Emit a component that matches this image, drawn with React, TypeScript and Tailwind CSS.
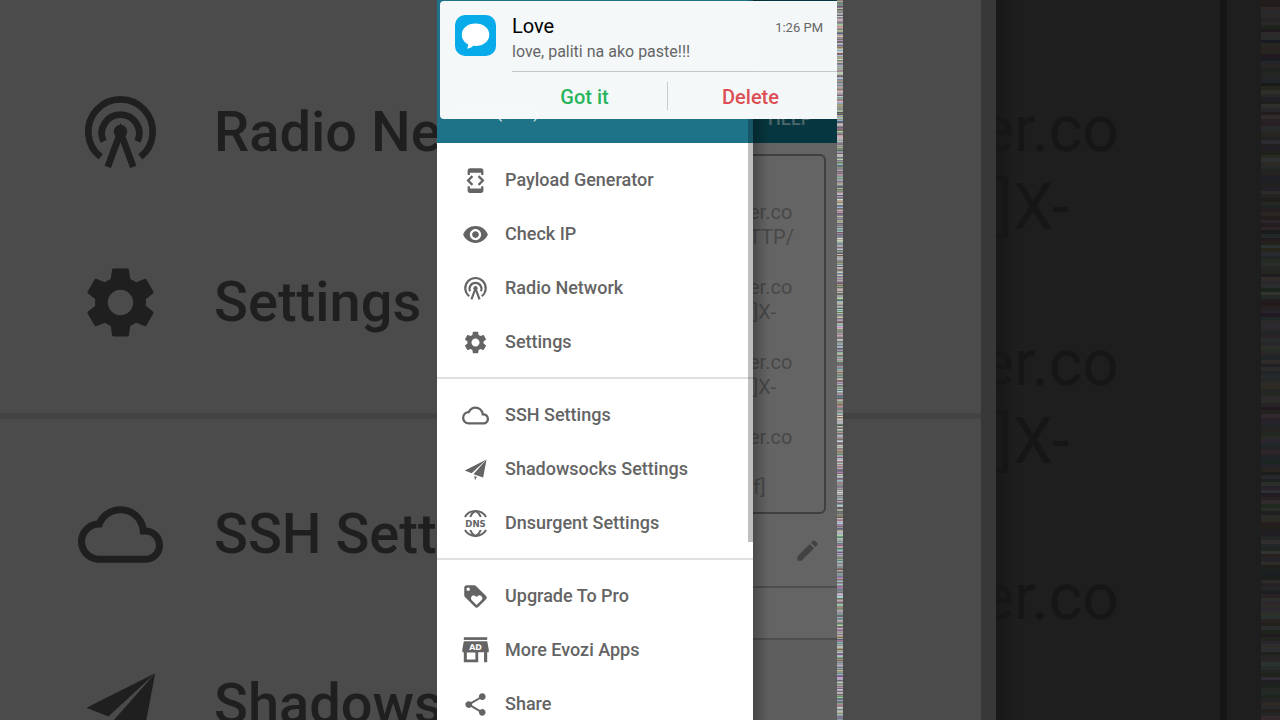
import type { ReactNode } from "react";
import {
  MdCloudQueue,
  MdDeveloperMode,
  MdEdit,
  MdLoyalty,
  MdSettings,
  MdShare,
  MdVisibility,
} from "react-icons/md";

type IconProps = { className?: string };

type MenuEntry = {
  label: string;
  icon: (props: IconProps) => ReactNode;
};

function RadioIcon({ className }: IconProps) {
  return (
    <svg
      viewBox="0 0 24 24"
      className={className}
      fill="none"
      stroke="currentColor"
      strokeWidth="1.9"
      aria-hidden="true"
    >
      <path d="M6.4 18.9A9.1 9.1 0 1 1 17.6 18.9" />
      <path d="M7.2 14.5A5.3 5.3 0 1 1 16.8 14.5" />
      <circle cx="12" cy="11.7" r="1.9" fill="currentColor" stroke="none" />
      <path d="M8.4 21.7L12 12L15.6 21.7" />
    </svg>
  );
}

function PlaneIcon({ className }: IconProps) {
  return (
    <svg viewBox="0 0 24 24" className={className} fill="currentColor" aria-hidden="true">
      <path d="M21.8 3.2L2.4 12.9L8.6 15.4Z" />
      <path d="M21.8 3.2L10.2 16.3L18.8 19Z" />
      <path d="M10.8 17.8L13.2 18.6L11.6 21.4Z" />
    </svg>
  );
}

function DnsIcon({ className }: IconProps) {
  return (
    <svg viewBox="0 0 24 24" className={className} overflow="visible" aria-hidden="true">
      <g fill="none" stroke="currentColor" strokeWidth="1.8">
        <path d="M2.6 6.2A11 11 0 0 1 21.4 6.2" />
        <path d="M7.3 6.2Q8.6 2.6 12 .8Q15.4 2.6 16.7 6.2" />
        <path d="M2.6 17.8A11 11 0 0 0 21.4 17.8" />
        <path d="M7.3 17.8Q8.6 21.4 12 23.2Q15.4 21.4 16.7 17.8" />
      </g>
      <text
        x="12"
        y="14.7"
        textAnchor="middle"
        fontSize="7.6"
        fontWeight="700"
        fontFamily="DejaVu Sans, sans-serif"
        fill="currentColor"
      >
        DNS
      </text>
    </svg>
  );
}

function StoreIcon({ className }: IconProps) {
  return (
    <svg viewBox="0 0 24 24" className={className} fill="currentColor" overflow="visible" aria-hidden="true">
      <path d="M1.6 .2H22.4V2.6H1.6Z" />
      <path d="M1.6 3.7H22.4L23.8 11V13.5H22.4V22.4H19.6V13.5H14.4V22.4H1.6V13.5H.3V11ZM4.3 13.8V20H11.9V13.8Z" fillRule="evenodd" />
      <text
        x="12"
        y="11.2"
        textAnchor="middle"
        fontSize="7"
        fontWeight="700"
        fontFamily="DejaVu Sans, sans-serif"
        fill="#fff"
      >
        AD
      </text>
    </svg>
  );
}

const MENU_GROUPS: MenuEntry[][] = [
  [
    { label: "Payload Generator", icon: MdDeveloperMode },
    { label: "Check IP", icon: MdVisibility },
    { label: "Radio Network", icon: RadioIcon },
    { label: "Settings", icon: MdSettings },
  ],
  [
    { label: "SSH Settings", icon: MdCloudQueue },
    { label: "Shadowsocks Settings", icon: PlaneIcon },
    { label: "Dnsurgent Settings", icon: DnsIcon },
  ],
  [
    { label: "Upgrade To Pro", icon: MdLoyalty },
    { label: "More Evozi Apps", icon: StoreIcon },
    { label: "Share", icon: MdShare },
  ],
];

const BACKDROP_GROUPS = [MENU_GROUPS[0].slice(2), MENU_GROUPS[1].slice(0, 2)];

const PAYLOAD_LINES = [
  "er.co",
  "TTP/",
  "",
  "er.co",
  "]X-",
  "",
  "er.co",
  "]X-",
  "",
  "er.co",
  "",
  "f]",
];

const BACKDROP_LINES = ["er.co", "]X-", "", "er.co", "]X-", "", "er.co"];

// Small deterministic generator so the static looks the same on every render.
function createRandom(seed: number) {
  let value = seed;
  return () => {
    value = (value * 1664525 + 1013904223) % 4294967296;
    return value / 4294967296;
  };
}

type StaticStripProps = {
  seed: number;
  rows: number;
  base: number;
  spread: number;
  className: string;
};

function StaticStrip({ seed, rows, base, spread, className }: StaticStripProps) {
  const random = createRandom(seed);
  const lines = Array.from({ length: rows }, () => {
    const level = base + (random() - 0.5) * spread;
    const channel = () => Math.round(level + (random() - 0.5) * spread * 0.6);
    return `rgb(${channel()},${channel()},${channel()})`;
  });

  return (
    <svg
      viewBox={`0 0 1 ${rows}`}
      preserveAspectRatio="none"
      shapeRendering="crispEdges"
      className={className}
      aria-hidden="true"
    >
      {lines.map((fill, row) => (
        <rect key={row} y={row} width="1" height="1" fill={fill} />
      ))}
    </svg>
  );
}

function MenuItem({ label, icon: Icon }: MenuEntry) {
  return (
    <li>
      <a href="#" className="flex h-[54px] items-center gap-4 pl-[25px] text-lg font-medium text-[#646464]">
        <Icon className="size-[27px] shrink-0" />
        {label}
      </a>
    </li>
  );
}

function Drawer() {
  return (
    <div className="relative z-10 w-[316px] shrink-0 bg-white">
      <div className="flex h-[143px] items-end bg-[#1e7388] pb-[18px] pl-5">
        <p className="text-base text-white/90">Build (1.03)</p>
      </div>
      <nav aria-label="Main menu" className="pt-2.5">
        {MENU_GROUPS.map((group, index) => (
          <ul
            key={index}
            className={index > 0 ? "mt-2 border-t-2 border-[#e0e0e0] pt-[9px]" : undefined}
          >
            {group.map((entry) => (
              <MenuItem key={entry.label} {...entry} />
            ))}
          </ul>
        ))}
      </nav>
      <div className="absolute top-0 right-0 h-[542px] w-[5px] bg-black/25" />
    </div>
  );
}

function PayloadPane() {
  return (
    <div className="relative flex min-w-0 flex-1 flex-col bg-[#5e5e5e]">
      <div className="flex h-[143px] items-end bg-[#06363f] pb-2.5 pl-[15px]">
        <button type="button" className="text-lg font-medium text-[#4d666b]">
          HELP
        </button>
      </div>
      <div className="bg-[#646464] pt-[11px]">
        <div className="mr-[11px] -ml-4 h-[360px] rounded-md border-2 border-[#404040] pt-11 pl-2.5 text-xl leading-[25px] text-[#484848]">
          {PAYLOAD_LINES.map((line, index) => (
            <p key={index} className={line.includes("]") ? "h-[25px] pl-1" : "h-[25px]"}>
              {line}
            </p>
          ))}
        </div>
        <div className="flex h-[72px] items-center justify-end pr-4">
          <button type="button" aria-label="Edit payload">
            <MdEdit className="size-[27px] text-[#424242]" />
          </button>
        </div>
        <div className="h-[54px] border-y-2 border-[#4e4e4e]" />
      </div>
      <div className="absolute inset-y-0 left-0 w-4 bg-linear-to-r from-black/25 to-transparent" />
    </div>
  );
}

function Notification() {
  return (
    <section
      aria-label="Message from Love"
      className="absolute top-px right-1.5 left-[3px] z-20 rounded-l bg-[#f7fafa]/99"
    >
      <div className="flex gap-4 pl-[15px]">
        <svg viewBox="0 0 41 41" className="mt-[14px] size-[41px] shrink-0" aria-hidden="true">
          <rect width="41" height="41" rx="10" fill="#08abea" />
          <path
            fill="#fff"
            d="M20.5 8.500C12.700 8.500 6.800 13.200 6.800 19.700C6.800 23.900 9.200 27.300 13 29.200C13.100 30.800 12.700 32.200 12 33.700C14.600 33.500 16.600 32.500 18.200 30.800C27 31.700 34.300 27 34.300 19.700C34.300 13.200 28.300 8.500 20.500 8.500Z"
          />
        </svg>
        <div className="flex h-[71px] flex-1 flex-col border-b border-[#c3c8c8] pt-[11px]">
          <div className="flex items-center justify-between pr-3.5">
            <h2 className="text-xl leading-7 text-black">Love</h2>
            <time className="pt-1 text-[13px] text-[#666666]">1:26 PM</time>
          </div>
          <p className="text-base leading-6 text-[#666666]">love, paliti na ako paste!!!</p>
        </div>
      </div>
      <div className="mr-1 ml-[62px] flex h-[47px] items-center text-xl font-medium">
        <button type="button" className="flex-1 pt-0.5 text-[#28b45c]">
          Got it
        </button>
        <div className="h-7 w-px bg-[#c8cccc]" />
        <button type="button" className="flex-1 pt-0.5 text-[#dc4f57]">
          Delete
        </button>
      </div>
    </section>
  );
}

function LeftBackdrop() {
  return (
    <div aria-hidden="true" className="min-w-0 flex-1 overflow-hidden bg-[#4b4b4b] pt-[47px] text-[#1f1f1f]">
      {BACKDROP_GROUPS.map((group, index) => (
        <ul
          key={index}
          className={index > 0 ? "mt-[26px] border-t-[6px] border-[#434343] pt-[30px]" : undefined}
        >
          {group.map(({ label, icon: Icon }) => (
            <li
              key={label}
              className="flex h-[170px] items-center gap-[51px] pl-[78px] text-[56px] font-medium whitespace-nowrap"
            >
              <Icon className="size-[85px] shrink-0" />
              {label}
            </li>
          ))}
        </ul>
      ))}
    </div>
  );
}

function RightBackdrop() {
  return (
    <div aria-hidden="true" className="flex min-w-0 flex-1 overflow-hidden bg-[#1e1e1e]">
      <div className="z-10 flex w-[153px] shrink-0 bg-[#4b4b4b]">
        <div className="flex-1 pt-[413px]">
          <div className="h-1.5 bg-[#434343]" />
        </div>
        <div className="w-[15px] bg-[#383838]" />
      </div>
      <div className="flex-1 border-r-[7px] border-[#151515] bg-linear-to-r from-[#181818] to-[#1e1e1e] to-10% pt-[91px] text-[64px] leading-[78px] text-[#161616]">
        {BACKDROP_LINES.map((line, index) => (
          <p key={index} className={line.includes("]") ? "h-[78px]" : "-ml-4 h-[78px]"}>
            {line}
          </p>
        ))}
      </div>
      <div className="w-[34px] shrink-0" />
      <StaticStrip seed={91} rows={200} base={38} spread={18} className="h-full w-[19px] shrink-0" />
    </div>
  );
}

export default function App() {
  return (
    <main className="flex h-screen overflow-hidden font-['Roboto',sans-serif]">
      <LeftBackdrop />
      <div className="relative flex w-[406px] shrink-0 overflow-hidden">
        <Drawer />
        <PayloadPane />
        <StaticStrip seed={17} rows={720} base={150} spread={90} className="h-full w-1.5 shrink-0" />
        <Notification />
      </div>
      <RightBackdrop />
    </main>
  );
}
